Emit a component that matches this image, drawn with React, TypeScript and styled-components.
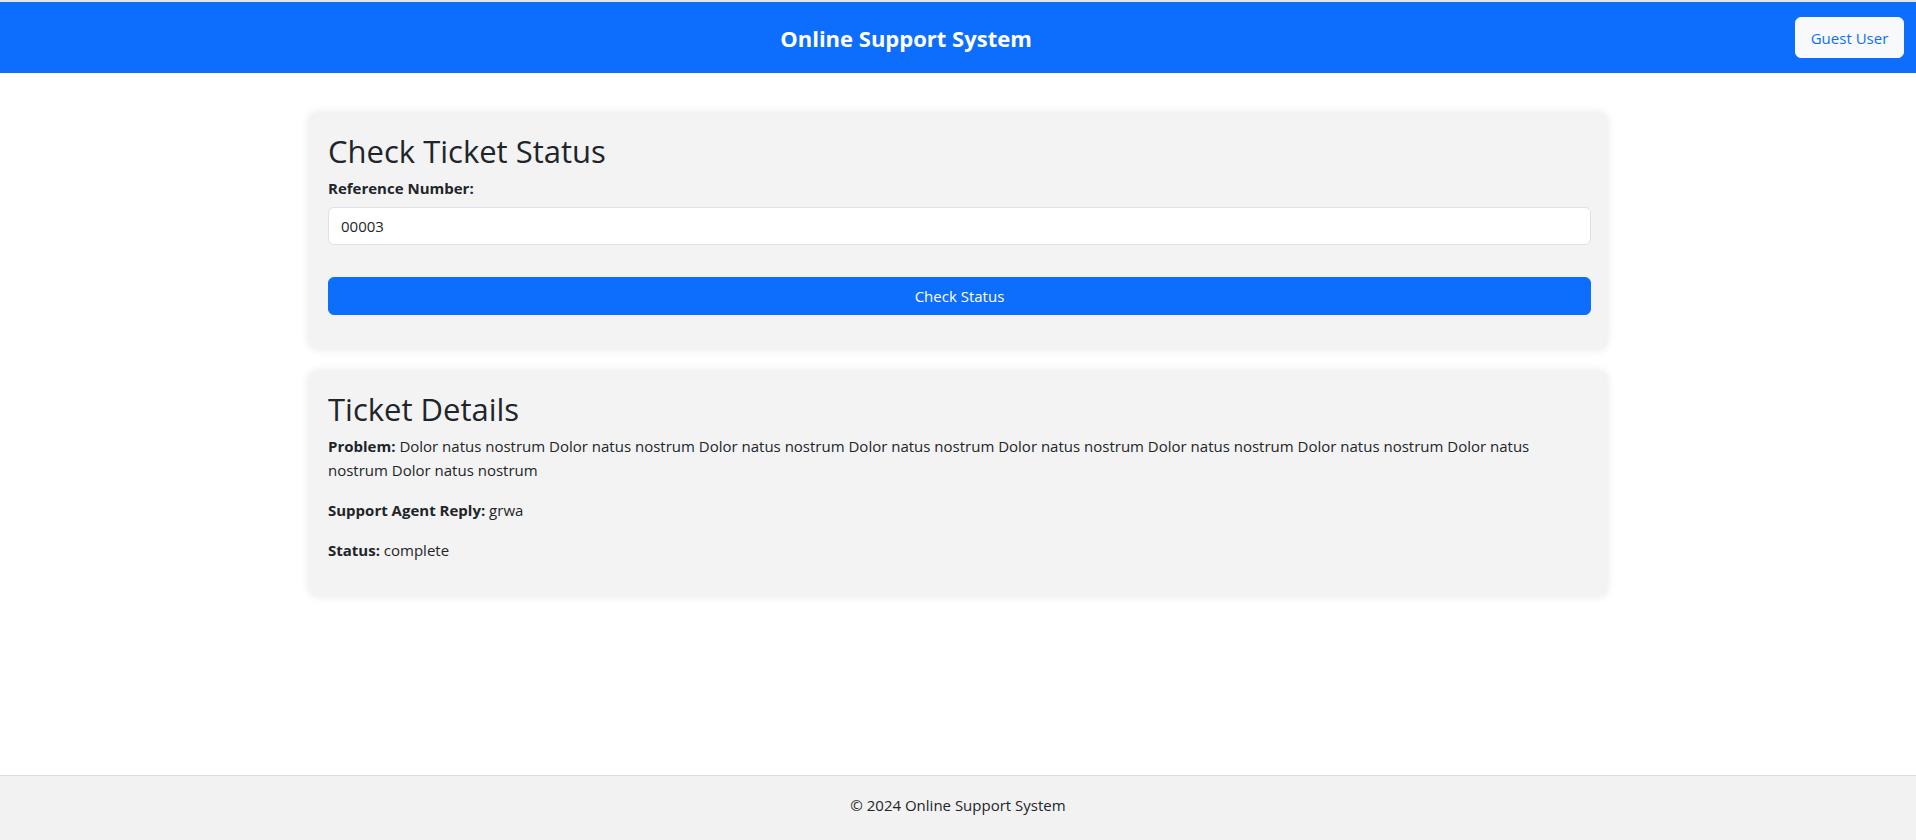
import React from "react";
import styled, { createGlobalStyle } from "styled-components";

const GlobalStyle = createGlobalStyle`
  html, body {
    margin: 0;
    padding: 0;
  }
  body {
    font-family: "Open Sans", "Noto Sans", "Liberation Sans", sans-serif;
    font-size: 16px;
    line-height: 24px;
    color: #212529;
    background: #ffffff;
  }
  * { box-sizing: border-box; }
`;

const Page = styled.div`
  min-height: 100vh;
  display: flex;
  flex-direction: column;
  border-top: 2px solid #e6e6e6;
`;

const Header = styled.header`
  height: 71px;
  background: #0d6efd;
  display: flex;
  align-items: center;
  padding: 0 12px 0 17px;
`;

const Brand = styled.h1`
  flex: 1;
  margin: 0;
  text-align: center;
  color: #ffffff;
  font-size: 22px;
  font-weight: 700;
  line-height: 30px;
`;

const UserButton = styled.button`
  width: 109px;
  height: 41px;
  border: 1px solid #f8f9fa;
  border-radius: 6px;
  background: #f8f9fa;
  color: #0d6efd;
  font-family: inherit;
  font-size: 15px;
  padding: 0;
`;

const Main = styled.main`
  flex: 1;
  width: 1298px;
  margin: 40px auto 0;
  display: flex;
  flex-direction: column;
  gap: 22px;
`;

const Card = styled.section`
  background: #f3f3f3;
  border-radius: 8px;
  box-shadow: 0 0 10px rgba(0, 0, 0, 0.1);
  padding: 19px 16px 18px 19px;
`;

const Title = styled.h2`
  margin: 0 0 6px;
  font-size: 31px;
  font-weight: 500;
  line-height: 38px;
`;

const Label = styled.label`
  display: block;
  font-weight: 700;
  font-size: 15px;
  margin-bottom: 7px;
`;

const Input = styled.input`
  display: block;
  width: 100%;
  height: 38px;
  padding: 6px 12px;
  font-family: inherit;
  font-size: 15px;
  color: #212529;
  background: #ffffff;
  border: 1px solid #dee2e6;
  border-radius: 6px;
  margin-bottom: 32px;
  outline: none;
`;

const SubmitButton = styled.button`
  display: block;
  width: 100%;
  height: 38px;
  border: 1px solid #0d6efd;
  border-radius: 6px;
  background: #0d6efd;
  color: #ffffff;
  font-family: inherit;
  font-size: 15px;
  margin-bottom: 16px;
`;

const Detail = styled.p`
  margin: 0 0 16px;
  font-size: 15px;
  line-height: 24px;
`;

const Strong = styled.strong`
  font-weight: 700;
`;

const Footer = styled.footer`
  background: #f2f2f2;
  border-top: 1px solid #dcdcdc;
  padding: 17px 0 23px;
  text-align: center;
  font-size: 15px;
  line-height: 24px;
`;

export default function App() {
  const problem = Array(9).fill("Dolor natus nostrum").join(" ");
  return (
    <>
      <GlobalStyle />
      <Page>
        <Header>
          <Brand>Online Support System</Brand>
          <UserButton>Guest User</UserButton>
        </Header>
        <Main>
          <Card>
            <Title>Check Ticket Status</Title>
            <Label htmlFor="ref">Reference Number:</Label>
            <Input id="ref" defaultValue="00003" />
            <SubmitButton>Check Status</SubmitButton>
          </Card>
          <Card>
            <Title>Ticket Details</Title>
            <Detail>
              <Strong>Problem:</Strong> {problem}
            </Detail>
            <Detail>
              <Strong>Support Agent Reply:</Strong> grwa
            </Detail>
            <Detail>
              <Strong>Status:</Strong> complete
            </Detail>
          </Card>
        </Main>
        <Footer>© 2024 Online Support System</Footer>
      </Page>
    </>
  );
}
